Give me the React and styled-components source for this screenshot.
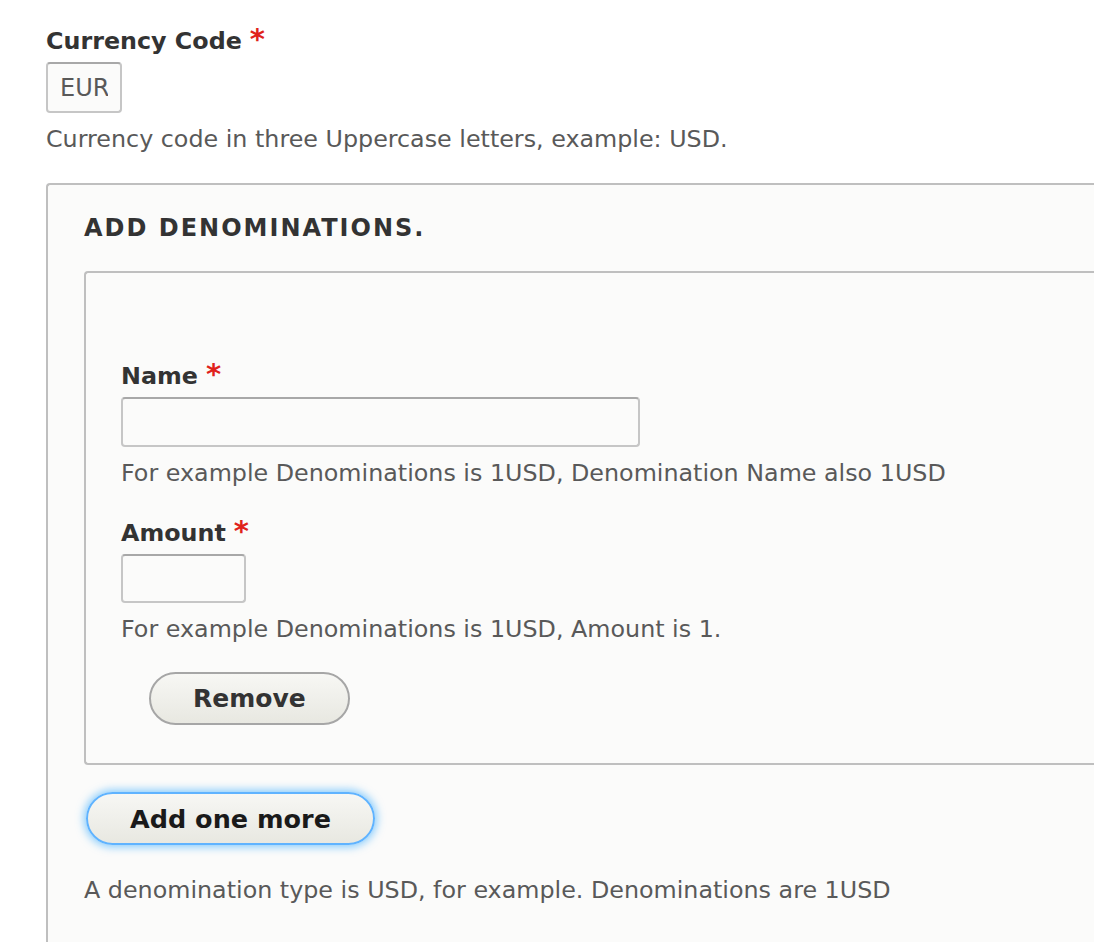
import React from "react";
import styled, { createGlobalStyle } from "styled-components";

const Global = createGlobalStyle`
  html, body { margin: 0; padding: 0; background: #fff; overflow: hidden; }
  body { font-family: "DejaVu Sans", "Liberation Sans", sans-serif; color: #333; }
`;

const Page = styled.div`
  padding: 24px 0 0 46px;
`;

const FormItem = styled.div`
  display: flex;
  flex-direction: column;
  align-items: flex-start;
  margin-top: ${(p) => p.$mt || 0}px;
`;

const Label = styled.label`
  display: flex;
  align-items: flex-start;
  font-size: 23.8px;
  font-weight: bold;
  color: #333;
  line-height: 34px;
  margin-bottom: 4px;
`;

const Star = styled.span`
  color: #e0221b;
  margin-left: 8px;
  font-weight: bold;
  font-size: 29px;
  line-height: 30px;
`;

const Input = styled.input`
  box-sizing: border-box;
  width: ${(p) => p.$w}px;
  height: ${(p) => p.$h || 50}px;
  border: 2px solid #c6c6c6;
  border-top-color: #a8a8a8;
  border-radius: 4px;
  background: #fbfbfa;
  font-family: inherit;
  font-size: 24px;
  color: #595959;
  padding: 0 12px;
  outline: none;
`;

const Description = styled.div`
  font-size: 23.8px;
  color: #595959;
  line-height: 34px;
  margin-top: ${(p) => p.$mt ?? 9}px;
`;

const Fieldset = styled.div`
  box-sizing: border-box;
  border: 2px solid #bfbfbf;
  border-right: none;
  border-radius: 4px 0 0 4px;
  background: #fbfbfa;
`;

const OuterFieldset = styled(Fieldset)`
  margin-top: 27px;
  padding: 26px 0 200px 36px;
`;

const Legend = styled.div`
  font-size: 24px;
  font-weight: bold;
  letter-spacing: 2px;
  text-transform: uppercase;
  color: #333;
  line-height: 34px;
`;

const InnerFieldset = styled(Fieldset)`
  margin-top: 26px;
  padding: 86px 0 38px 35px;
`;

const Button = styled.button`
  box-sizing: border-box;
  height: 53px;
  padding: 0 42px;
  border-radius: 30px;
  border: 2px solid ${(p) => (p.$focus ? "#5fb3ff" : "#a6a6a6")};
  background: linear-gradient(to bottom, #f7f7f4, #e8e8e1);
  font-family: inherit;
  font-weight: bold;
  font-size: ${(p) => (p.$focus ? 25.5 : 25)}px;
  color: ${(p) => (p.$focus ? "#1a1a1a" : "#333")};
  box-shadow: ${(p) => (p.$focus ? "0 0 8px 2px rgba(51, 170, 255, 0.6)" : "none")};
  cursor: pointer;
`;

const ButtonRow = styled.div`
  margin: ${(p) => p.$mt || 0}px 0 0 ${(p) => p.$ml || 0}px;
`;

export default function App() {
  return (
    <Page>
      <Global />
      <FormItem>
        <Label>
          Currency Code<Star>*</Star>
        </Label>
        <Input $w={76} $h={51} defaultValue="EUR" />
        <Description>Currency code in three Uppercase letters, example: USD.</Description>
      </FormItem>

      <OuterFieldset>
        <Legend>Add denominations.</Legend>
        <InnerFieldset>
          <FormItem>
            <Label>
              Name<Star>*</Star>
            </Label>
            <Input $w={519} />
            <Description>For example Denominations is 1USD, Denomination Name also 1USD</Description>
          </FormItem>
          <FormItem $mt={26}>
            <Label>
              Amount<Star>*</Star>
            </Label>
            <Input $w={125} $h={49} />
            <Description>For example Denominations is 1USD, Amount is 1.</Description>
          </FormItem>
          <ButtonRow $mt={26} $ml={28}>
            <Button>Remove</Button>
          </ButtonRow>
        </InnerFieldset>
        <ButtonRow $mt={27} $ml={2}>
          <Button $focus>Add one more</Button>
        </ButtonRow>
        <Description $mt={28}>
          A denomination type is USD, for example. Denominations are 1USD
        </Description>
      </OuterFieldset>
    </Page>
  );
}
